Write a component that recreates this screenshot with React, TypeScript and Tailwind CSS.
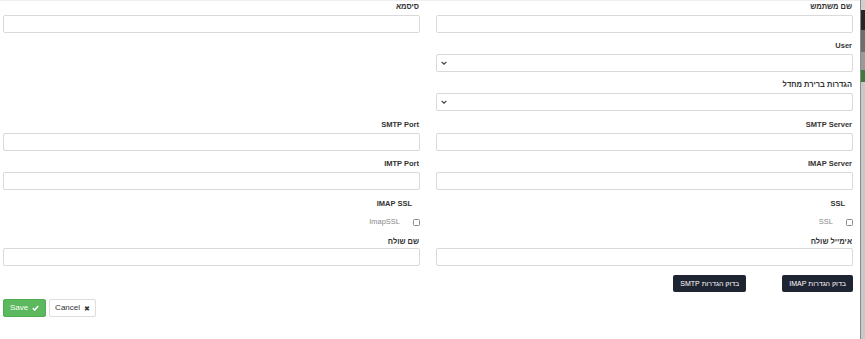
import React from "react";

const font = { fontFamily: '"Liberation Sans", Arial, "DejaVu Sans", sans-serif' };

function Label({ text, className = "" }: { text: string; className?: string }) {
  return (
    <div className={`h-[9px] leading-[9px] text-[7.5px] font-bold text-[#333] pr-[1px] whitespace-nowrap ${className}`}>
      {text}
    </div>
  );
}

function TextBox() {
  return <div className="h-[18px] w-full rounded-[2px] border border-[#d9d9d9] bg-white" />;
}

function SelectBox() {
  return (
    <div className="h-[18px] w-full rounded-[2px] border border-[#d9d9d9] bg-white flex items-center pl-[4px]" dir="ltr">
      <svg width="6" height="4" viewBox="0 0 6 4">
        <path d="M0.6 0.8 L3 3.2 L5.4 0.8" fill="none" stroke="#444" strokeWidth="1.2" />
      </svg>
    </div>
  );
}

function Field({ label, select, mb = "mb-[8px]" }: { label: string; select?: boolean; mb?: string }) {
  return (
    <div className={mb}>
      <Label text={label} className="mb-[4px]" />
      {select ? <SelectBox /> : <TextBox />}
    </div>
  );
}

function Check({ text }: { text: string }) {
  return (
    <div className="h-[10px] flex items-center gap-[13px]">
      <div className="w-[7px] h-[7px] rounded-[1.5px] border border-[#888] bg-white" />
      <span className="text-[7.5px] text-[#8a8a8a] leading-[10px]">{text}</span>
    </div>
  );
}

function DarkButton({ text }: { text: string }) {
  return (
    <div className="h-[17px] px-[7px] rounded-[2px] bg-[#1f2433] text-white text-[7px] leading-[17px] whitespace-nowrap">
      {text}
    </div>
  );
}

export default function App() {
  return (
    <div className="w-[865px] h-[339px] flex bg-white overflow-hidden" style={font}>
      <div className="w-[860px] h-full border-t border-[#efefef] pl-[3px] pr-[7px] pt-[1px]" dir="rtl">
        <div className="grid grid-cols-2 gap-x-[16px]">
          <Field label="שם משתמש" />
          <Field label="סיסמא" />

          <Field label="User" select />
          <div />

          <Field label="הגדרות ברירת מחדל" select mb="mb-[9px]" />
          <div />

          <Field label="SMTP Server" />
          <Field label="SMTP Port" />

          <Field label="IMAP Server" />
          <Field label="IMTP Port" />

          <div className="pt-[1px]">
            <Label text="SSL" className="pr-[8px] mb-[9px]" />
            <Check text="SSL" />
          </div>
          <div className="pt-[1px]">
            <Label text="IMAP SSL" className="pr-[8px] mb-[9px]" />
            <Check text="ImapSSL" />
          </div>

          <div className="mt-[10px]">
            <Label text="אימייל שולח" className="mb-[2px]" />
            <TextBox />
          </div>
          <div className="mt-[10px]">
            <Label text="שם שולח" className="mb-[2px]" />
            <TextBox />
          </div>

          <div className="mt-[9px] flex gap-[36px]">
            <DarkButton text="בדוק הגדרות IMAP" />
            <DarkButton text="בדוק הגדרות SMTP" />
          </div>
          <div />
        </div>

        <div dir="ltr" className="mt-[7px] flex gap-[3px]">
          <div className="h-[18px] w-[43px] rounded-[2px] bg-[#5cb85c] border border-[#4cae4c] flex items-center justify-center gap-[4px] text-white text-[8px]">
            <span>Save</span>
            <svg width="7" height="6" viewBox="0 0 7 6">
              <path d="M0.8 3.2 L2.7 5 L6.2 1" fill="none" stroke="#fff" strokeWidth="1.6" />
            </svg>
          </div>
          <div className="h-[18px] w-[47px] rounded-[2px] bg-white border border-[#ddd] flex items-center justify-center gap-[4px] text-[#333] text-[8px]">
            <span>Cancel</span>
            <span className="text-[7px] font-bold leading-none">✖</span>
          </div>
        </div>
      </div>
      <div className="w-[1px] h-full bg-[#8a8a8a]" />
      <div className="flex-1 h-full flex flex-col">
        <div className="h-[10px] bg-[#d0d0d0]" />
        <div className="h-[20px] bg-[#262626]" />
        <div className="h-[22px] bg-[#6e6e6e]" />
        <div className="h-[18px] bg-[#9a9a9a]" />
        <div className="h-[12px] bg-[#3d7a3d]" />
        <div className="flex-1 bg-[#c8c8c8]" />
      </div>
    </div>
  );
}
